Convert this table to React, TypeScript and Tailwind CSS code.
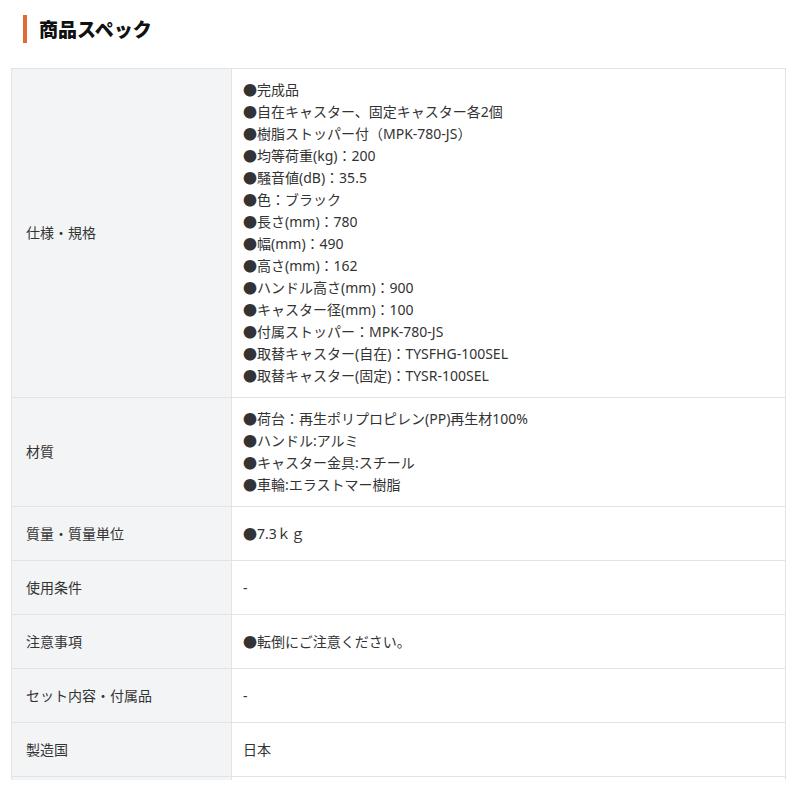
import React from "react";

const font = { fontFamily: '"Noto Sans", "Noto Sans CJK JP", sans-serif' };

type Row = { label: string; items?: string[]; text?: string };

const rows: Row[] = [
  {
    label: "仕様・規格",
    items: [
      "完成品",
      "自在キャスター、固定キャスター各2個",
      "樹脂ストッパー付（MPK-780-JS）",
      "均等荷重(kg)：200",
      "騒音値(dB)：35.5",
      "色：ブラック",
      "長さ(mm)：780",
      "幅(mm)：490",
      "高さ(mm)：162",
      "ハンドル高さ(mm)：900",
      "キャスター径(mm)：100",
      "付属ストッパー：MPK-780-JS",
      "取替キャスター(自在)：TYSFHG-100SEL",
      "取替キャスター(固定)：TYSR-100SEL",
    ],
  },
  {
    label: "材質",
    items: [
      "荷台：再生ポリプロピレン(PP)再生材100%",
      "ハンドル:アルミ",
      "キャスター金具:スチール",
      "車輪:エラストマー樹脂",
    ],
  },
  { label: "質量・質量単位", items: ["7.3ｋｇ"] },
  { label: "使用条件", text: "-" },
  { label: "注意事項", items: ["転倒にご注意ください。"] },
  { label: "セット内容・付属品", text: "-" },
  { label: "製造国", text: "日本" },
];

export default function App() {
  return (
    <div className="w-[800px] h-[804px] bg-white text-[#333]" style={font}>
      <div className="pt-[15px] pl-[23px] flex items-center gap-[12px]">
        <div className="w-[4px] h-[28px] bg-[#e26a35]" />
        <h2
          className="text-[19px] font-black text-[#111] leading-[28px]"
          style={{ fontFamily: '"Noto Sans CJK JP", sans-serif' }}
        >
          商品スペック
        </h2>
      </div>
      <div className="mt-[25px] ml-[11px] w-[775px] border-t border-l border-r border-[#e3e3e3]">
        {rows.map((r, i) => (
          <div key={i} className="flex border-b border-[#e3e3e3]">
            <div className="w-[220px] shrink-0 bg-[#f3f4f6] border-r border-[#e3e3e3] pl-[14px] flex items-center text-[14px] leading-[22px]">
              {r.label}
            </div>
            <div className="flex-1 pl-[11px] py-[10px] min-h-[53px] flex flex-col justify-center text-[14px] leading-[22px]">
              {r.items
                ? r.items.map((t, j) => <div key={j}>●{t}</div>)
                : <div>{r.text}</div>}
            </div>
          </div>
        ))}
        <div className="flex h-[3px]">
          <div className="w-[220px] shrink-0 bg-[#f3f4f6] border-r border-[#e3e3e3]" />
          <div className="flex-1" />
        </div>
      </div>
    </div>
  );
}
